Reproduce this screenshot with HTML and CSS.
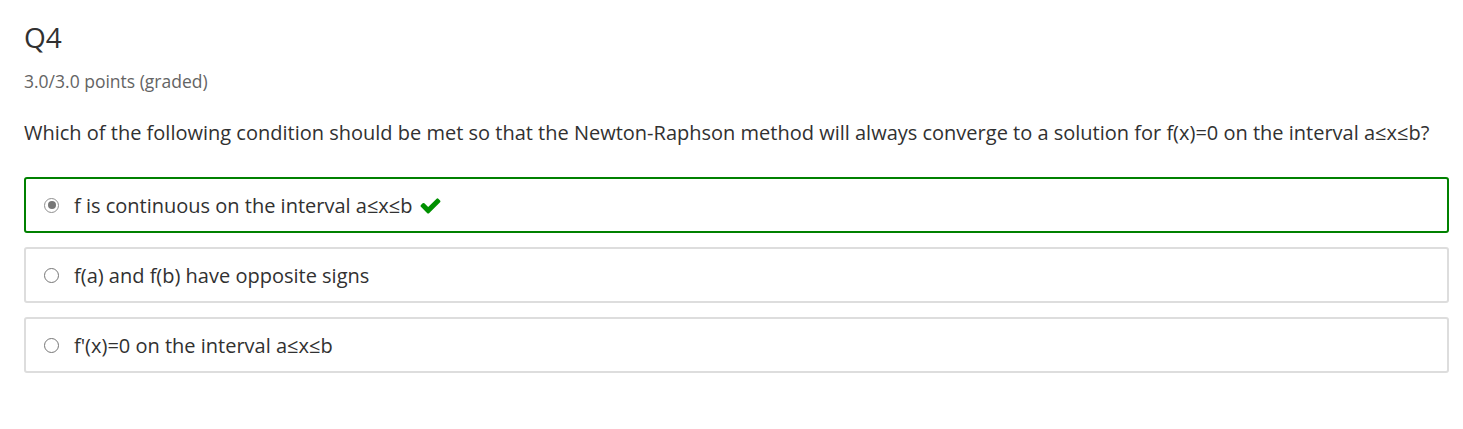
FILE: index.html
```html
<!DOCTYPE html>
<html>
<head>
<meta charset="utf-8">
<link rel="stylesheet" href="styles.css">
</head>
<body>
<div class="problem">
  <h3 class="title">Q4</h3>
  <div class="points">3.0/3.0 points (graded)</div>
  <p class="question">Which of the following condition should be met so that the Newton-Raphson method will always converge to a solution for f(x)=0 on the interval a≤x≤b?</p>
  <div class="choices">
    <label class="choice correct">
      <span class="radio checked"></span>
      <span class="text">f is continuous on the interval a≤x≤b</span>
      <svg class="check" viewBox="0 0 1792 1792" width="23" height="23"><path fill="#009000" d="M1671 566q0 40-28 68l-724 724-136 136q-28 28-68 28t-68-28l-136-136-362-362q-28-28-28-68t28-68l136-136q28-28 68-28t68 28l294 295 656-657q28-28 68-28t68 28l136 136q28 28 28 68z"/></svg>
    </label>
    <label class="choice">
      <span class="radio"></span>
      <span class="text">f(a) and f(b) have opposite signs</span>
    </label>
    <label class="choice">
      <span class="radio"></span>
      <span class="text">f'(x)=0 on the interval a≤x≤b</span>
    </label>
  </div>
</div>
</body>
</html>
```
FILE: styles.css
```css
html, body {
  margin: 0;
  padding: 0;
  background: #fff;
}
body {
  font-family: "Open Sans", "Liberation Sans", sans-serif;
  color: #313131;
}
.problem {
  padding: 19px 14px 0 24px;
}
.title {
  margin: 0;
  font-size: 28px;
  font-weight: 400;
  line-height: 36px;
  color: #313131;
}
.points {
  margin-top: 15px;
  font-size: 17.5px;
  line-height: 22px;
  color: #646464;
}
.question {
  margin: 28px 0 0 0;
  font-size: 20px;
  line-height: 26px;
  color: #313131;
  white-space: nowrap;
}
.choices {
  margin-top: 31px;
  display: flex;
  flex-direction: column;
  gap: 14px;
}
.choice {
  display: flex;
  align-items: center;
  height: 56px;
  box-sizing: border-box;
  border: 2px solid #dddddd;
  border-radius: 3px;
  padding-left: 18px;
  font-size: 20px;
  color: #313131;
}
.choice.correct {
  border-color: #008100;
}
.radio {
  width: 15px;
  height: 15px;
  border: 1px solid #767676;
  border-radius: 50%;
  box-sizing: border-box;
  background: #fff;
  margin-right: 15px;
  position: relative;
  flex: none;
}
.radio.checked {
  border-color: #8f8f8f;
}
.radio.checked::after {
  content: "";
  position: absolute;
  left: 2.5px;
  top: 2.5px;
  width: 8px;
  height: 8px;
  border-radius: 50%;
  background: #777;
}
.check {
  margin-left: 6px;
  margin-top: 1px;
}
```
